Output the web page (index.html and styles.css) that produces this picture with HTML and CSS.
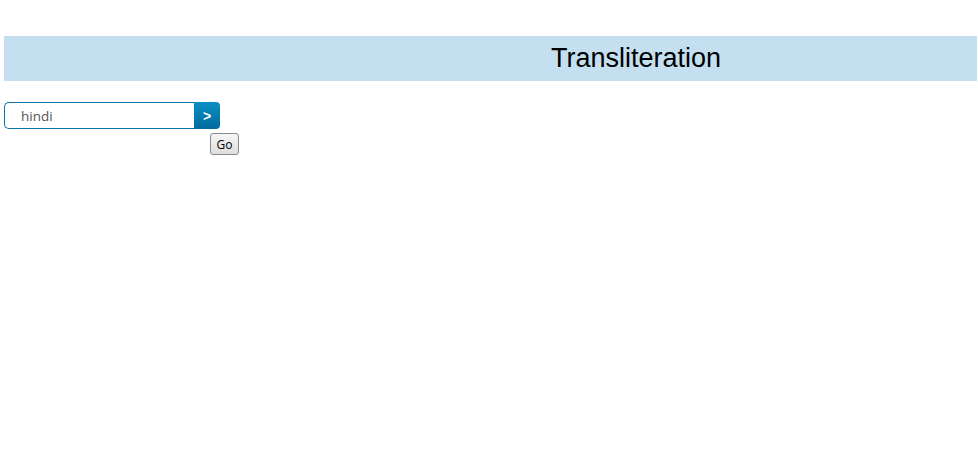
FILE: index.html
```html
<!DOCTYPE html>
<html>
<head>
<meta charset="utf-8">
<link rel="stylesheet" href="styles.css">
</head>
<body>
<div class="banner"><h1 class="title">Transliteration</h1></div>
<div class="search">
  <input class="field" type="text" value="hindi">
  <button class="arrow" type="button">&gt;</button>
</div>
<div class="go-row"><button class="go" type="button">Go</button></div>
</body>
</html>
```
FILE: styles.css
```css
html, body { margin: 0; padding: 0; background: #fff; }
body { padding: 36px 1px 0 4px; font-family: "Liberation Sans", Arial, sans-serif; }
.banner { height: 45px; background: #c3dff0; display: flex; align-items: center; padding-left: 547px; }
.title { margin: 0; font-size: 27px; font-weight: normal; color: #000; line-height: 1; position: relative; top: 0; }
.search { display: flex; margin-top: 21px; height: 27px; width: 216px; }
.field { box-sizing: border-box; width: 190px; height: 27px; margin: 0; border: 1px solid #0a73a8; border-right: none; border-radius: 5px 0 0 5px; padding: 0 0 0 16px; font-family: "Open Sans", sans-serif; font-size: 13.5px; color: #555; outline: none; }
.arrow { box-sizing: border-box; width: 26px; height: 27px; margin: 0; padding: 0; border: none; border-radius: 0 4px 4px 0; background: linear-gradient(#0b8fc4, #006b9c); color: #fff; font-family: "Liberation Sans", Arial, sans-serif; font-weight: bold; font-size: 14px; }
.go-row { display: flex; padding-left: 206px; margin-top: 4px; }
.go { box-sizing: border-box; height: 22px; width: 29px; padding: 0; margin: 0; font-family: "Open Sans", sans-serif; font-size: 12px; color: #000; background: linear-gradient(#f6f6f6, #dedede); border: 1px solid #8a8a8a; border-radius: 3px; }
```
